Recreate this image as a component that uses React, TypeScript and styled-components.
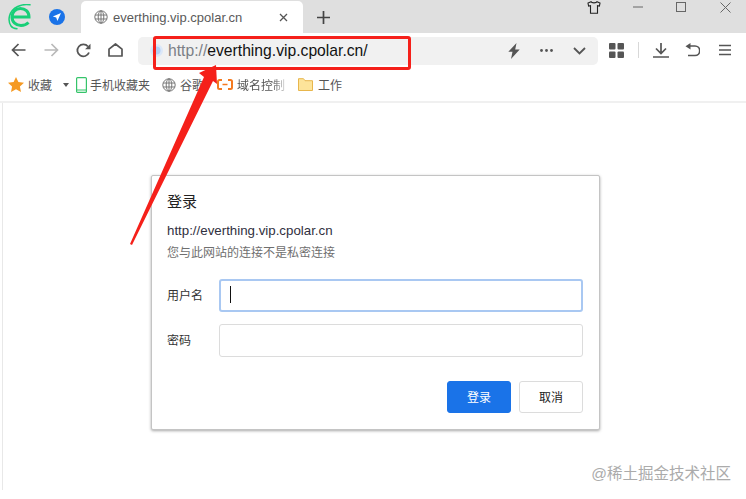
import { ReactNode } from 'react';
import styled, { createGlobalStyle } from 'styled-components';

const FONT = '"Liberation Sans", "Noto Sans CJK SC", sans-serif';

const GlobalStyle = createGlobalStyle`
  html, body {
    margin: 0;
    padding: 0;
    background: #fff;
    overflow: hidden;
  }
  * { box-sizing: border-box; }
`;

const Window = styled.div`
  position: relative;
  width: 746px;
  height: 499px;
  overflow: hidden;
  background: #fff;
  font-family: ${FONT};
  display: flex;
  flex-direction: column;
`;

/* tab strip */
const TabStrip = styled.div`
  height: 33px;
  flex: none;
  background: #dfdfdf;
  display: flex;
  align-items: flex-end;
`;

const Logo = styled.div`
  width: 49px;
  height: 33px;
  flex: none;
  padding: 0 0 0 8px;
  display: flex;
  align-items: center;
`;

const Pinned = styled.div`
  width: 32px;
  height: 33px;
  flex: none;
  display: flex;
  align-items: center;
`;

const Tab = styled.div`
  width: 222px;
  height: 32px;
  flex: none;
  padding: 0 15px 0 13px;
  background: #fff;
  border-radius: 5px 5px 0 0;
  display: flex;
  align-items: center;
  gap: 5px;
`;

const TabTitle = styled.span`
  flex: 1;
  font-size: 13px;
  color: #5a5a5a;
`;

const NewTab = styled.div`
  width: 40px;
  height: 32px;
  display: flex;
  align-items: center;
  justify-content: center;
`;

const Caption = styled.div`
  margin-left: auto;
  height: 33px;
  display: flex;
  align-self: flex-start;
  align-items: flex-start;
`;

const CaptionButton = styled.div<{ $w: number }>`
  width: ${({ $w }) => $w}px;
  height: 14px;
  display: flex;
  align-items: center;
  justify-content: center;
`;

/* toolbar */
const Toolbar = styled.div`
  height: 34px;
  flex: none;
  display: flex;
  align-items: center;
  padding: 0 15px 0 11px;
`;

const NavButton = styled.div<{ $w: number; $left?: number }>`
  width: ${({ $w }) => $w}px;
  margin-left: ${({ $left }) => $left ?? 0}px;
  flex: none;
  display: flex;
  align-items: center;
`;

const UrlBar = styled.div`
  width: 460px;
  height: 28px;
  flex: none;
  margin: 1px 0 0 10px;
  padding: 0 12px 0 12px;
  background: #f1f1f1;
  border-radius: 5px;
  display: flex;
  align-items: center;
`;

const UrlScheme = styled.span`
  font-size: 15.7px;
  color: #7b7f86;
  margin-left: 5px;
`;

const UrlHost = styled.span`
  font-size: 15.7px;
  color: #111;
`;

const UrlActions = styled.div`
  margin-left: auto;
  display: flex;
  align-items: center;
  gap: 20px;
`;

const ToolIcons = styled.div`
  margin-left: auto;
  display: flex;
  align-items: center;
`;

const Divider = styled.div`
  width: 1px;
  height: 16px;
  background: #d8d8d8;
  margin: 0 14px;
`;

/* bookmarks */
const Bookmarks = styled.div`
  height: 36px;
  flex: none;
  border-bottom: 2px solid #f0f0f0;
  padding: 1px 0 0 8px;
  display: flex;
  align-items: center;
`;

const Bookmark = styled.div<{ $gap?: number; $w: number }>`
  width: ${({ $w }) => $w}px;
  flex: none;
  display: flex;
  align-items: center;
  gap: ${({ $gap }) => $gap ?? 4}px;
  font-size: 12px;
  color: #555;
  white-space: nowrap;
  overflow: hidden;
`;

const FadedLabel = styled.span`
  mask-image: linear-gradient(to right, #000 72%, rgba(0, 0, 0, 0.25) 100%);
`;

const ClippedLabel = styled.span`
  display: block;
  width: 25px;
  overflow: hidden;
`;

const Caret = styled.div`
  width: 0;
  height: 0;
  margin-left: 7px;
  border-left: 3.5px solid transparent;
  border-right: 3.5px solid transparent;
  border-top: 4px solid #555;
`;

/* page */
const Page = styled.div`
  flex: 1;
  margin: 0 0 9px 2px;
  padding: 72px 0 0 148px;
  border-left: 1px solid #e8e8e8;
`;

const Dialog = styled.div`
  width: 449px;
  height: 255px;
  padding: 16px 16px 0 15px;
  background: #fff;
  border: 1px solid #c4c4c4;
  border-radius: 2px;
  box-shadow: 0 1px 3px rgba(0, 0, 0, 0.35);
`;

const DialogTitle = styled.div`
  font-size: 15px;
  line-height: 20px;
  color: #222;
`;

const Origin = styled.div`
  margin-top: 11px;
  font-size: 13.3px;
  line-height: 16px;
  color: #303040;
`;

const Warning = styled.div`
  margin-top: 6px;
  font-size: 12px;
  line-height: 16px;
  color: #6f6f6f;
`;

const Field = styled.div<{ $top: number }>`
  margin-top: ${({ $top }) => $top}px;
  display: flex;
  align-items: center;
`;

const FieldLabel = styled.div`
  width: 52px;
  padding-bottom: 2px;
  font-size: 12px;
  color: #333;
`;

const InputBox = styled.div<{ $focused?: boolean }>`
  width: 364px;
  height: 33px;
  padding: 0 0 2px 9px;
  display: flex;
  align-items: center;
  background: #fff;
  border-radius: 3px;
  border: ${({ $focused }) => ($focused ? '2px solid #a9c8f2' : '1px solid #dcdcdc')};
`;

const TextCursor = styled.div`
  width: 1px;
  height: 17px;
  background: #111;
`;

const Actions = styled.div`
  margin-top: 24px;
  display: flex;
  justify-content: flex-end;
  gap: 8px;
`;

const Button = styled.div<{ $primary?: boolean }>`
  width: 64px;
  height: 32px;
  padding-bottom: 2px;
  border-radius: 3px;
  display: flex;
  align-items: center;
  justify-content: center;
  font-size: 12px;
  background: ${({ $primary }) => ($primary ? '#1a73e8' : '#fff')};
  color: ${({ $primary }) => ($primary ? '#fff' : '#222')};
  border: 1px solid ${({ $primary }) => ($primary ? '#1a73e8' : '#dcdcdc')};
`;

/* things laid over the screenshot */
const Annotation = styled.svg`
  position: absolute;
  left: 0;
  top: 0;
  pointer-events: none;
`;

const Watermark = styled.div`
  position: absolute;
  right: 15px;
  bottom: 16px;
  font-size: 15.5px;
  line-height: 18px;
  color: #ababab;
`;

function Icon({ w, h, children }: { w: number; h: number; children: ReactNode }) {
  return (
    <svg width={w} height={h} viewBox={`0 0 ${w} ${h}`} fill="none" style={{ display: 'block', flex: 'none' }}>
      {children}
    </svg>
  );
}

function GlobeIcon({ color = '#777' }: { color?: string }) {
  return (
    <Icon w={14} h={14}>
      <g stroke={color} strokeWidth="1">
        <circle cx="7" cy="7" r="6.2" />
        <ellipse cx="7" cy="7" rx="2.8" ry="6.2" />
        <path d="M1 5h12M1 9h12M7 1v12" />
      </g>
    </Icon>
  );
}

export default function App() {
  return (
    <Window>
      <GlobalStyle />
      <TabStrip>
        <Logo>
          <Icon w={24} h={26}>
            <path
              d="M4.500 13H21C21 7.500 17 4.500 12.500 4.500 7.500 4.500 4 8.500 4 13c0 5 4 8.500 9 8.500 3 0 5.500-1 7.500-3"
              stroke="#18cf78"
              strokeWidth="3"
            />
            <path
              d="M22 .8C14-.5 4 3 1.500 12 .5 16 1 19 3 22c1 1.500 3 2.500 6 2.800"
              stroke="#18cf78"
              strokeWidth="1.500"
              strokeLinecap="round"
            />
          </Icon>
        </Logo>
        <Pinned>
          <Icon w={16} h={16}>
            <circle cx="8" cy="8" r="8" fill="#1a73e8" />
            <path d="M12 4 3.800 7.400l3.400 1.200L8.400 12z" fill="#fff" />
          </Icon>
        </Pinned>
        <Tab>
          <GlobeIcon />
          <TabTitle>everthing.vip.cpolar.cn</TabTitle>
          <Icon w={9} h={9}>
            <path d="M1 1l7 7M8 1 1 8" stroke="#555" strokeWidth="1.300" />
          </Icon>
        </Tab>
        <NewTab>
          <Icon w={13} h={13}>
            <path d="M6.500 0v13M0 6.500h13" stroke="#444" strokeWidth="1.700" />
          </Icon>
        </NewTab>
        <Caption>
          <CaptionButton $w={46}>
            <Icon w={14} h={13}>
              <path
                d="M4 .7 1 2l.6 3 1.900-.4v7.700h7V4.600l1.900.4.6-3L10 .7c-.5 1.600-5.500 1.600-6 0z"
                stroke="#222"
                strokeWidth="1.100"
              />
            </Icon>
          </CaptionButton>
          <CaptionButton $w={41}>
            <Icon w={10} h={2}>
              <path d="M0 1h10" stroke="#666" strokeWidth="1" />
            </Icon>
          </CaptionButton>
          <CaptionButton $w={46}>
            <Icon w={10} h={10}>
              <rect x=".5" y=".5" width="9" height="9" stroke="#666" />
            </Icon>
          </CaptionButton>
          <CaptionButton $w={42}>
            <Icon w={11} h={11}>
              <path d="M.5.5l10 10M10.500.5l-10 10" stroke="#666" />
            </Icon>
          </CaptionButton>
        </Caption>
      </TabStrip>

      <Toolbar>
        <NavButton $w={33}>
          <Icon w={15} h={14}>
            <path d="M14.500 7H1.500M7.500 1l-6 6 6 6" stroke="#555" strokeWidth="1.700" />
          </Icon>
        </NavButton>
        <NavButton $w={32}>
          <Icon w={15} h={14}>
            <path d="M.5 7h13M7.500 1l6 6-6 6" stroke="#b9b9b9" strokeWidth="1.700" />
          </Icon>
        </NavButton>
        <NavButton $w={32}>
          <Icon w={15} h={15}>
            <path d="M13 9.500A6 6 0 1 1 12 3.500" stroke="#555" strokeWidth="1.800" />
            <path d="M14.500.8v5.400H9.100z" fill="#555" />
          </Icon>
        </NavButton>
        <NavButton $w={20}>
          <Icon w={15} h={14}>
            <path d="M1 13V6.200L7.500 1 14 6.200V13z" stroke="#555" strokeWidth="1.700" strokeLinejoin="round" />
          </Icon>
        </NavButton>
        <UrlBar>
          <Icon w={13} h={13}>
            <circle cx="6.500" cy="6.500" r="6.500" fill="#dbe7f8" />
            <circle cx="6.500" cy="6.500" r="4" fill="#b3d0f5" />
          </Icon>
          <UrlScheme>http://</UrlScheme>
          <UrlHost>everthing.vip.cpolar.cn/</UrlHost>
          <UrlActions>
            <Icon w={12} h={16}>
              <path d="M8.500 0 .3 8.700h4.200L3 16l8.700-9.500H7.200z" fill="#555" />
            </Icon>
            <Icon w={13} h={3}>
              <g fill="#555">
                <circle cx="1.500" cy="1.500" r="1.400" />
                <circle cx="6.500" cy="1.500" r="1.400" />
                <circle cx="11.500" cy="1.500" r="1.400" />
              </g>
            </Icon>
            <Icon w={13} h={8}>
              <path d="M1 1l5.500 5.500L12 1" stroke="#555" strokeWidth="1.800" />
            </Icon>
          </UrlActions>
        </UrlBar>
        <ToolIcons>
          <Icon w={15} h={15}>
            <g fill="#555">
              <rect width="6.500" height="6.500" rx="1" />
              <rect x="8.500" width="6.500" height="6.500" rx="1" />
              <rect y="8.500" width="6.500" height="6.500" rx="1" />
              <rect x="8.500" y="8.500" width="6.500" height="6.500" rx="1" />
            </g>
          </Icon>
          <Divider />
          <Icon w={16} h={15}>
            <path d="M8 0v10M3 5.500 8 10.500l5-5M0 14h16" stroke="#555" strokeWidth="1.700" />
          </Icon>
          <NavButton $w={17} $left={16}>
            <Icon w={15} h={14}>
              <path d="M5 3h5a4.200 4.200 0 0 1 0 9.500H3" stroke="#555" strokeWidth="1.700" />
              <path d="M5.500 0v6.500L.5 3.200z" fill="#555" />
            </Icon>
          </NavButton>
          <NavButton $w={12} $left={17}>
            <Icon w={12} h={12}>
              <path d="M0 1.500h12M0 6h12M0 10.500h12" stroke="#555" strokeWidth="1.600" />
            </Icon>
          </NavButton>
        </ToolIcons>
      </Toolbar>

      <Bookmarks>
        <Bookmark $w={68} $gap={4}>
          <Icon w={16} h={15}>
            <path d="M8 0l2.400 5 5.600.7-4.100 3.800 1.100 5.500L8 12.300 3 15l1.100-5.500L0 5.700 5.600 5z" fill="#f59a23" />
          </Icon>
          收藏
          <Caret />
        </Bookmark>
        <Bookmark $w={86} $gap={3}>
          <Icon w={11} h={16}>
            <rect x=".6" y=".6" width="9.800" height="14.800" rx="1" stroke="#35c46a" strokeWidth="1.200" />
            <path d="M1 13h9" stroke="#35c46a" />
          </Icon>
          手机收藏夹
        </Bookmark>
        <Bookmark $w={55} $gap={4}>
          <GlobeIcon />
          <ClippedLabel>谷歌</ClippedLabel>
        </Bookmark>
        <Bookmark $w={81} $gap={4}>
          <Icon w={16} h={11}>
            <path d="M5 1H2.500Q1 1 1 2.500v6Q1 10 2.500 10H5M11 1h2.500Q15 1 15 2.500v6q0 1.500-1.500 1.500H11" stroke="#f47a20" strokeWidth="2" />
            <path d="M5.500 5.500h5" stroke="#f47a20" strokeWidth="1.500" />
          </Icon>
          <FadedLabel>域名控制</FadedLabel>
        </Bookmark>
        <Bookmark $w={60} $gap={5}>
          <Icon w={15} h={13}>
            <path d="M.5 12.500V.7h5l1.500 2h7.500v9.800z" fill="#fde49a" stroke="#e8b64c" />
          </Icon>
          工作
        </Bookmark>
      </Bookmarks>

      <Page>
        <Dialog>
          <DialogTitle>登录</DialogTitle>
          <Origin>http://everthing.vip.cpolar.cn</Origin>
          <Warning>您与此网站的连接不是私密连接</Warning>
          <Field $top={18}>
            <FieldLabel>用户名</FieldLabel>
            <InputBox $focused>
              <TextCursor />
            </InputBox>
          </Field>
          <Field $top={12}>
            <FieldLabel>密码</FieldLabel>
            <InputBox />
          </Field>
          <Actions>
            <Button $primary>登录</Button>
            <Button>取消</Button>
          </Actions>
        </Dialog>
      </Page>

      <Annotation width={746} height={499} viewBox="0 0 746 499" fill="none">
        <rect x="154.500" y="37.500" width="255" height="31" rx="1.500" stroke="#f5201a" strokeWidth="3" />
        <path d="M130 244 204 77 199 73 216 65 217 84 213 81 132 245z" fill="#f5201a" />
      </Annotation>
      <Watermark>@稀土掘金技术社区</Watermark>
    </Window>
  );
}
